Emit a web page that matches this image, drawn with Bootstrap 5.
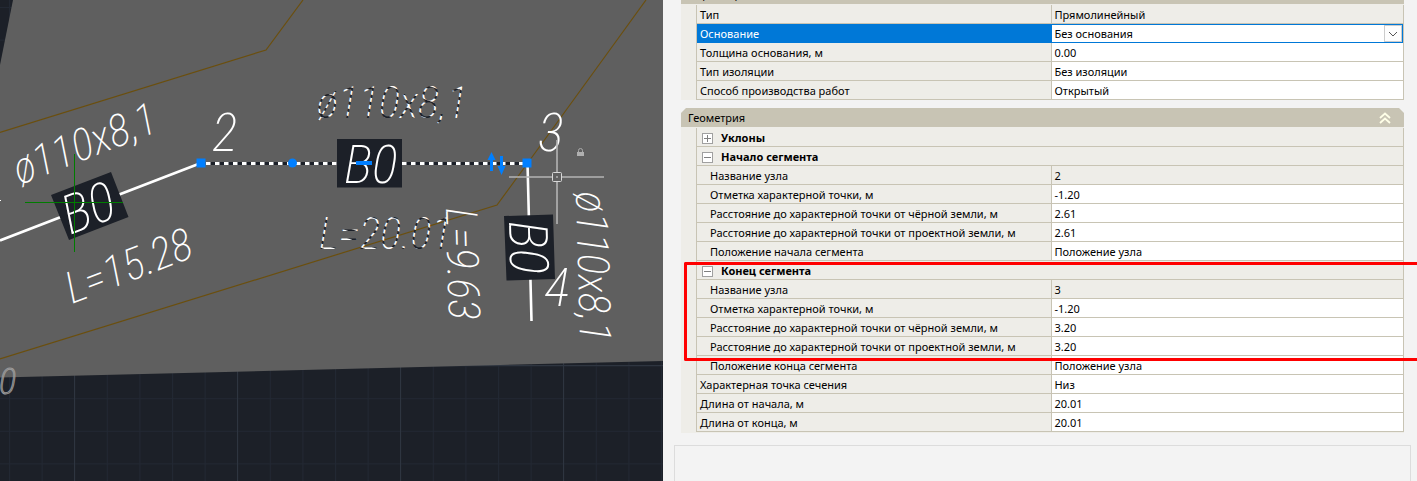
<!DOCTYPE html>
<html lang="ru">
<head>
<meta charset="utf-8">
<meta name="viewport" content="width=device-width, initial-scale=1">
<title>Свойства сегмента</title>
<link href="https://cdn.jsdelivr.net/npm/bootstrap@5.3.0/dist/css/bootstrap.min.css" rel="stylesheet">
<style>
  :root { --line: #c8c4b4; --cell: #eeede8; --accent: #0078d7; }
  body { background: #f3f3f3; color: #000; font-family: "Noto Sans", "Open Sans", sans-serif; font-size: 11px; line-height: 16px; }
  .workspace { display: grid; grid-template-columns: minmax(0, 663fr) minmax(0, 754fr); grid-template-rows: minmax(0, 1fr); }
  .drawing { background: #1c2028; }
  .props { padding: 0 13px 0 18px; }
  .props-scroll { flex: 0 0 auto; margin-bottom: 12px; }
  .section-cut { margin-top: -15px; }
  .section-head { height: 19px; background: var(--line); padding: 1px 13px 0 7px;
    clip-path: polygon(5px 0, calc(100% - 5px) 0, 100% 5px, 100% 100%, 0 100%, 0 5px); }
  .props-body { background: var(--cell); padding: 1px 0 0 15px; }
  .props-body.last { padding-bottom: 1px; }
  .grid-table { width: 100%; table-layout: fixed; border-collapse: separate; border-spacing: 0;
    border-left: 1px solid var(--line); border-right: 1px solid var(--line); }
  .name-col { width: 50.2%; }
  .grid-table th, .grid-table td { height: 19px; padding: 2px 3px 0; border-bottom: 1px solid var(--line);
    font-weight: 400; white-space: nowrap; overflow: hidden; }
  .grid-table td { border-left: 1px solid var(--line); background: #fff; padding-left: 2px; }
  .grid-table td.locked { background: var(--cell); }
  .grid-table .nested th { padding-left: 13px; }
  .grid-table th.group-row { font-weight: 700; padding-left: 5px; }
  .grid-table .chosen th { background: var(--accent); color: #fff; border-color: var(--accent); }
  .grid-table .chosen td { border-color: var(--accent); box-shadow: inset 0 1px var(--accent), inset -1px 0 var(--accent); }
  .pick { appearance: none; border: 0; background: transparent; outline: 0; height: 16px; font-size: 11px; line-height: 16px; color: #000; }
  .pick-arrow { right: 1px; top: 1px; width: 18px; height: 17px; background: #fdfdfd; border: 1px solid #ccc; pointer-events: none; }
  .toggle { width: 11px; height: 11px; background: #fff; border: 1px solid #a0a0a0; color: #808080; }
  .marked { position: relative; }
  .marked::after { content: ""; position: absolute; inset: 1px -15px -5px -13px; border: 3px solid #f00; border-right: 0; border-radius: 2px 0 0 2px; pointer-events: none; }
  .hint { border: 1px solid #dcdcdc; border-bottom: 0; margin: 0 -7px; }
  .cad { font-family: "Roboto Condensed", "Liberation Sans Narrow", sans-serif; font-weight: 200; font-style: italic; fill: #fff; }
</style>
</head>
<body>
<main class="workspace vh-100 overflow-hidden">
  <section class="drawing overflow-hidden" aria-label="Чертёж">
    <svg class="d-block w-100 h-100" viewBox="0 0 663 481" preserveAspectRatio="xMinYMin slice">
      <defs>
        <pattern id="minor" x="9" y="7" width="32.6" height="32.6" patternUnits="userSpaceOnUse">
          <path d="M.5 0V33M0 .5H33" stroke="#222833" fill="none"/>
        </pattern>
        <pattern id="picked" width="7" height="7" patternUnits="userSpaceOnUse" patternTransform="rotate(20)">
          <path fill="#fff" d="M0 0H7V4H0z"/><path fill="#1c2028" d="M0 4H7V7H0z"/>
        </pattern>
      </defs>
      <rect width="663" height="481" fill="#1c2028"/>
      <rect width="663" height="481" fill="url(#minor)"/>
      <path d="M74.500 360V481M237.500 360V481M400.500 360V481M563.500 360V481M400 365.500H663" stroke="#2e3540"/>
      <path d="M13 0H663V361L0 377.500V65z" fill="#5f5f5f"/>
      <path d="M0 132.500L266 50L303 0M0 359L497 205L527 164L617 40L646 0" fill="none" stroke="#6b4f0e" stroke-width="1.200"/>

      <path d="M0 240.500L201 163M527.500 163L531.500 321" stroke="#fff" stroke-width="2.600"/>
      <path d="M51 195L111 172L128.500 217L69 240zM337 139H402V187.500H337zM504 216L553 214.500L555 279L506.500 280.500z" fill="#1c2028"/>
      <path d="M206 163.500H337M402 163.500H523" stroke="#1c2028" stroke-width="3"/>
      <path d="M206 163.500H337M402 163.500H523" stroke="#fff" stroke-width="3" stroke-dasharray="4.500 4.500"/>
      <path d="M0 200.500H1" stroke="#fff"/>

      <g class="cad">
        <text font-size="44" transform="translate(20 185) rotate(-21.200)">ø110x8,1</text>
        <text font-size="44" transform="translate(72 304) rotate(-21.200)">L=15.28</text>
        <text font-size="54" transform="translate(70 235) rotate(-21.200)">В0</text>
        <text font-size="54" x="212" y="151">2</text>
        <text font-size="54" x="538" y="151">3</text>
        <text font-size="54" x="344" y="183">В0</text>
        <text font-size="44" x="317" y="118" fill="url(#picked)">ø110x8,1</text>
        <text font-size="44" x="319" y="249" fill="url(#picked)">L=20.01</text>
        <text font-size="54" x="544" y="306">4</text>
        <text font-size="44" transform="translate(576 192) rotate(88.500)">ø110x8,1</text>
        <text font-size="44" transform="translate(446 208) rotate(88.500)">L=9.63</text>
        <text font-size="54" transform="translate(509 221) rotate(88.500)">В0</text>
        <text font-size="36" x="-1" y="394" fill="none" stroke="#9a9a9a" stroke-width="1">0</text>
      </g>

      <path d="M74.500 154V252M25 202.500H123" stroke="#007c00"/>
      <g fill="#007fff">
        <path d="M196.500 158.500H205.500V167.500H196.500zM522.500 158.500H531.500V167.500H522.500zM356 161H372V165H356z"/>
        <circle cx="292.500" cy="163" r="4.500"/>
        <path d="M491.500 152L495.500 160H493V171H490V160H487.500zM501.500 175L505.500 166H503V156H500V166H497.500z"/>
      </g>
      <path d="M509 177H552M562 177H604M557 140V172M557 182V224" stroke="#b4b4b4" stroke-width="1.600"/>
      <rect x="552.500" y="172.500" width="9" height="9" rx="1" fill="none" stroke="#d8d8d8"/>
      <path d="M556 177H558" stroke="#d8d8d8"/>
      <path d="M578.500 152V150.500A2 2 0 0 1 582.500 150.500V152" fill="none" stroke="#aaa"/>
      <rect x="577" y="152" width="7" height="4" fill="#b0b0b0"/>
    </svg>
  </section>

  <aside class="props d-flex flex-column" aria-label="Свойства">
    <div class="props-scroll">
      <section class="section-cut mb-2">
        <header class="section-head">Параметры</header>
        <div class="props-body">
          <table class="grid-table">
            <colgroup><col class="name-col"><col></colgroup>
            <tbody>
              <tr><th scope="row">Тип</th><td class="locked">Прямолинейный</td></tr>
              <tr class="chosen">
                <th scope="row"><label class="d-block" for="base">Основание</label></th>
                <td class="position-relative">
                  <select class="pick d-block w-100 p-0" id="base"><option>Без основания</option></select>
                  <svg class="pick-arrow position-absolute" viewBox="0 0 16 15" aria-hidden="true"><path d="M4 6L8 10L12 6" fill="none" stroke="#555"/></svg>
                </td>
              </tr>
              <tr><th scope="row">Толщина основания, м</th><td>0.00</td></tr>
              <tr><th scope="row">Тип изоляции</th><td>Без изоляции</td></tr>
              <tr><th scope="row">Способ производства работ</th><td>Открытый</td></tr>
            </tbody>
          </table>
        </div>
      </section>

      <section>
        <header class="section-head d-flex justify-content-between align-items-center">
          <span>Геометрия</span>
          <button class="btn p-0 border-0 d-flex" type="button" aria-label="Свернуть">
            <svg width="12" height="12" viewBox="0 0 12 12"><path d="M1 6L6 1.500L11 6M1 11L6 6.500L11 11" fill="none" stroke="#ffffe8" stroke-width="1.800"/></svg>
          </button>
        </header>
        <div class="props-body last">
          <table class="grid-table">
            <colgroup><col class="name-col"><col></colgroup>
            <tbody>
              <tr><th class="group-row" colspan="2" scope="rowgroup"><div class="d-flex align-items-center"><button class="toggle p-0 d-flex me-2" type="button" aria-label="Развернуть"><svg viewBox="0 0 9 9" width="9" height="9"><path d="M1 4.500H8M4.500 1V8" stroke="currentColor"/></svg></button>Уклоны</div></th></tr>
            </tbody>
            <tbody class="nested">
              <tr><th class="group-row" colspan="2" scope="rowgroup"><div class="d-flex align-items-center"><button class="toggle p-0 d-flex me-2" type="button" aria-label="Свернуть"><svg viewBox="0 0 9 9" width="9" height="9"><path d="M1 4.500H8" stroke="currentColor"/></svg></button>Начало сегмента</div></th></tr>
              <tr><th scope="row">Название узла</th><td class="locked">2</td></tr>
              <tr><th scope="row">Отметка характерной точки, м</th><td>-1.20</td></tr>
              <tr><th scope="row">Расстояние до характерной точки от чёрной земли, м</th><td>2.61</td></tr>
              <tr><th scope="row">Расстояние до характерной точки от проектной земли, м</th><td>2.61</td></tr>
              <tr><th scope="row">Положение начала сегмента</th><td>Положение узла</td></tr>
            </tbody>
            <tbody class="nested marked">
              <tr><th class="group-row" colspan="2" scope="rowgroup"><div class="d-flex align-items-center"><button class="toggle p-0 d-flex me-2" type="button" aria-label="Свернуть"><svg viewBox="0 0 9 9" width="9" height="9"><path d="M1 4.500H8" stroke="currentColor"/></svg></button>Конец сегмента</div></th></tr>
              <tr><th scope="row">Название узла</th><td class="locked">3</td></tr>
              <tr><th scope="row">Отметка характерной точки, м</th><td>-1.20</td></tr>
              <tr><th scope="row">Расстояние до характерной точки от чёрной земли, м</th><td>3.20</td></tr>
              <tr><th scope="row">Расстояние до характерной точки от проектной земли, м</th><td>3.20</td></tr>
            </tbody>
            <tbody class="nested">
              <tr><th scope="row">Положение конца сегмента</th><td>Положение узла</td></tr>
            </tbody>
            <tbody>
              <tr><th scope="row">Характерная точка сечения</th><td>Низ</td></tr>
              <tr><th scope="row">Длина от начала, м</th><td>20.01</td></tr>
              <tr><th scope="row">Длина от конца, м</th><td>20.01</td></tr>
            </tbody>
          </table>
        </div>
      </section>
    </div>
    <div class="hint flex-grow-1"></div>
  </aside>
</main>
<script src="https://cdn.jsdelivr.net/npm/bootstrap@5.3.0/dist/js/bootstrap.bundle.min.js"></script>
</body>
</html>
